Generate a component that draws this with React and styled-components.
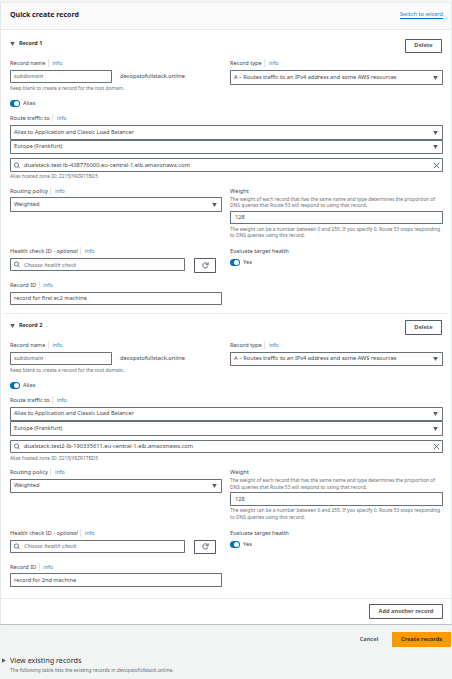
import React from 'react';
import styled, { createGlobalStyle } from 'styled-components';

const GlobalStyle = createGlobalStyle`
  * { box-sizing: border-box; }
  body {
    margin: 0;
    background: #f2f3f3;
    color: #414750;
    font: 5.69px/7px "Noto Sans", "Open Sans", sans-serif;
  }
`;

const Page = styled.main`
  display: flex;
  flex-direction: column;
  width: 452px;
  height: 679px;
  padding-top: 2px;
  overflow: hidden;
  white-space: nowrap;
`;

const Card = styled.section`
  display: flex;
  flex-direction: column;
  height: 623px;
  background: #fff;
  border: 1px solid #e6e9e9;
  border-bottom-color: #b9c0c4;
`;

const CardHeader = styled.header`
  display: flex;
  align-items: center;
  justify-content: space-between;
  height: 27px;
  padding: 0 8px 4px 9px;
  background: #fafafa;
  border-bottom: 1px solid #e6e9e9;
`;

const CardTitle = styled.h1`
  margin: 0;
  color: #1f232a;
  font-size: 7.06px;
  line-height: 10px;
  font-weight: 700;
`;

const WizardLink = styled.a`
  height: 8px;
  margin-top: 2px;
  line-height: 7px;
  color: #2a86c2;
  border-bottom: 1px solid #0073bb;
`;

const RecordBox = styled.section`
  display: flex;
  flex-direction: column;
  height: ${(p) => p.$h}px;
  margin: 0 4px;
  padding: ${(p) => p.$top}px 4px 0 5px;
  & + & { margin-top: 1px; }
`;

const RecordHead = styled.div`
  display: flex;
  justify-content: space-between;
  align-items: flex-start;
  height: ${(p) => p.$h}px;
  padding-right: 1px;
`;

const RecordTitle = styled.h2`
  display: flex;
  align-items: center;
  gap: 4px;
  margin: ${(p) => p.$mt}px 0 0;
  height: 8px;
  color: #2a2f36;
  font-size: 5.45px;
  font-weight: 700;
`;

const Button = styled.button`
  display: flex;
  align-items: center;
  justify-content: center;
  width: ${(p) => p.$w}px;
  height: ${(p) => p.$h}px;
  padding: 0 0 ${(p) => p.$lift ?? 1}px;
  font: 700 5.66px/7px "Noto Sans", sans-serif;
  color: #545b64;
  background: #fff;
  border: 1px solid #545b64;
  border-radius: 0.8px;
`;

const PrimaryButton = styled(Button)`
  color: #3a2c17;
  background: #ff9900;
  border-color: #ff9900;
`;

const TextButton = styled(Button)`
  background: transparent;
  border-color: transparent;
`;

const Columns = styled.div`
  display: grid;
  grid-template-columns: 212px 213px;
  column-gap: 8px;
  height: ${(p) => p.$h}px;
`;

const Field = styled.div`
  display: flex;
  flex-direction: column;
  height: ${(p) => (p.$h ? `${p.$h}px` : 'auto')};
`;

const LabelRow = styled.div`
  display: flex;
  align-items: center;
  height: 8px;
  margin-bottom: ${(p) => p.$gap ?? 3}px;
  line-height: 8px;
  white-space: pre;
`;

const Info = styled.a`
  height: 8px;
  margin-left: 2.4px;
  padding-left: 3.7px;
  color: #2a86c2;
  font-size: 5.3px;
  border-left: 1px solid #e1e4e6;
`;

const Control = styled.div`
  display: flex;
  align-items: center;
  width: ${(p) => (p.$w ? `${p.$w}px` : '100%')};
  height: ${(p) => p.$h}px;
  flex: none;
  margin-top: ${(p) => p.$mt ?? 0}px;
  padding: 0 ${(p) => p.$end ?? 4}px 0 3px;
  background: #fff;
  border: 1px solid #687078;
  border-radius: 0.8px;
`;

const Value = styled.span`
  flex: 1;
  padding-bottom: ${(p) => p.$lift ?? 0}px;
  padding-left: ${(p) => p.$indent ?? 0}px;
  font-size: ${(p) => p.$size ?? 5.64}px;
`;

const Placeholder = styled.em`
  flex: 1;
  color: #687078;
  font-size: 5.8px;
  padding-top: ${(p) => p.$drop ?? 0}px;
  padding-left: ${(p) => p.$indent ?? 0}px;
`;

const Helper = styled.p`
  margin: ${(p) => p.$mt}px 0 0;
  color: #687078;
  font-size: 4.86px;
  line-height: ${(p) => p.$lh ?? 6}px;
`;

const Inline = styled.div`
  display: flex;
  align-items: ${(p) => p.$align ?? 'center'};
  gap: ${(p) => p.$gap}px;
`;

const ToggleRow = styled.div`
  display: flex;
  align-items: center;
  gap: 3px;
  height: 7px;
  margin-top: ${(p) => p.$mt}px;
`;

const ToggleText = styled.span`
  margin-top: -1px;
`;

const Track = styled.span`
  display: flex;
  justify-content: flex-end;
  align-items: center;
  width: 10px;
  height: 6.5px;
  padding-right: 0.8px;
  border-radius: 4px;
  background: #0073bb;
`;

const Knob = styled.span`
  width: 5px;
  height: 5px;
  border-radius: 50%;
  background: #fff;
`;

const Footer = styled.footer`
  display: flex;
  justify-content: flex-end;
  padding: 5px 8px 0 0;
  border-top: 1px solid #e6e9e9;
`;

const RecordList = styled.div`
  display: flex;
  flex-direction: column;
  height: 568px;
`;

const Divider = styled.hr`
  width: 442px;
  height: 1px;
  margin: 0 4px;
  border: 0;
  background: #e6e9e9;
`;

const Actions = styled.div`
  display: flex;
  justify-content: flex-end;
  gap: 3px;
  height: 15px;
  margin-top: 7px;
  padding-right: 1px;
`;

const Existing = styled.section`
  display: flex;
  align-items: flex-start;
  gap: 4px;
  margin-top: 8px;
  padding-left: 2px;
`;

const ExistingTitle = styled.h2`
  margin: 0;
  color: #2a2f36;
  font-size: 7.22px;
  line-height: 10px;
  font-weight: 400;
`;

const Icon = styled.svg`
  display: block;
  flex: none;
  margin-top: ${(p) => p.$mt ?? 0}px;
`;

const Caret = ({ mt }) => (
  <Icon width="5" height="4" viewBox="0 0 5 4" $mt={mt}>
    <path d="M0.2 0h4.6L2.5 3.9z" fill="#545b64" />
  </Icon>
);

const CaretRight = () => (
  <Icon width="4" height="5" viewBox="0 0 4 5" $mt={3}>
    <path d="M0 0.2v4.6L3.9 2.5z" fill="#545b64" />
  </Icon>
);

const SearchIcon = () => (
  <Icon width="6" height="7" viewBox="0 0 6 7" fill="none" stroke="#545b64" strokeWidth="0.8">
    <circle cx="2.5" cy="3" r="2.1" />
    <path d="M4 4.5l1.9 1.9" />
  </Icon>
);

const CloseIcon = () => (
  <Icon width="7" height="7" viewBox="0 0 7 7" stroke="#545b64" strokeWidth="0.9">
    <path d="M0.8 0.8l5.4 5.4M6.2 0.8L0.8 6.2" />
  </Icon>
);

const RefreshIcon = () => (
  <Icon width="7" height="7" viewBox="0 0 7 7" fill="none" stroke="#545b64" strokeWidth="0.9">
    <path d="M5.8 4.2A2.6 2.6 0 1 1 5 1.4L5.9 2.4M6.2 0.3v2.4H3.8" />
  </Icon>
);

const Label = ({ children, info, gap }) => (
  <LabelRow $gap={gap}>
    {children}
    {info && <Info>info</Info>}
  </LabelRow>
);

const Select = ({ h, w, children, lift = 1 }) => (
  <Control $h={h} $w={w}>
    <Value $lift={lift}>{children}</Value>
    <Caret />
  </Control>
);

const Toggle = ({ mt, children }) => (
  <ToggleRow $mt={mt}>
    <Track><Knob /></Track>
    <ToggleText>{children}</ToggleText>
  </ToggleRow>
);

const RECORDS = [
  {
    title: 'Record 1',
    host: 'dualstack.test-lb-438776000.eu-central-1.elb.amazonaws.com',
    id: 'record for first ec2 machine',
    m: {
      h: 283, top: 9, titleMt: 0, head: 20, del: 14, delLift: 1, nameRow: 55, type: 15, nameHelp: 2, alias: 9,
      route: 73, app: 15, region: 14, regionLift: 1, search: 14, hosted: 1, policyRow: 60, policy: 15,
      policyGap: 2, lh: 6, weightMt: 3, weight: 13, weightHelp: 2, healthRow: 34, healthDrop: 1,
      refresh: 15, evalMt: 1, idGap: 3, recordId: 13,
    },
  },
  {
    title: 'Record 2',
    host: 'dualstack.test2-lb-190335611.eu-central-1.elb.amazonaws.com',
    id: 'record for 2nd machine',
    m: {
      h: 284, top: 5, titleMt: 1, head: 21, del: 15, delLift: 0, nameRow: 55, type: 14, nameHelp: 2, alias: 9,
      route: 72, app: 14, region: 15, regionLift: 0, search: 13, hosted: 2, policyRow: 61, policy: 14,
      policyGap: 3, lh: 7, weightMt: 1, weight: 14, weightHelp: 1, healthRow: 34, healthDrop: 0,
      refresh: 14, evalMt: 1, idGap: 2, recordId: 14,
    },
  },
];

const Record = ({ title, host, id, m }) => (
  <RecordBox $h={m.h} $top={m.top}>
    <RecordHead $h={m.head}>
      <RecordTitle $mt={m.titleMt}><Caret mt={1} />{title}</RecordTitle>
      <Button $w={37} $h={m.del} $lift={m.delLift}>Delete</Button>
    </RecordHead>
    <Columns $h={m.nameRow}>
      <Field>
        <Label info>Record name</Label>
        <Inline $gap={8}>
          <Control $w={102} $h={13}><Placeholder>subdomain</Placeholder></Control>
          <span>devopstofullstack.online</span>
        </Inline>
        <Helper $mt={m.nameHelp}>Keep blank to create a record for the root domain.</Helper>
        <Toggle mt={m.alias}>Alias</Toggle>
      </Field>
      <Field>
        <Label info>Record type</Label>
        <Select h={m.type}>A – Routes traffic to an IPv4 address and some AWS resources</Select>
      </Field>
    </Columns>
    <Field $h={m.route}>
      <Label info>Route traffic to</Label>
      <Select h={m.app}>Alias to Application and Classic Load Balancer</Select>
      <Select h={m.region} lift={m.regionLift}>Europe (Frankfurt)</Select>
      <Control $h={m.search} $mt={4} $end={2}>
        <SearchIcon />
        <Value $indent={4} $size={5.74}>{host}</Value>
        <CloseIcon />
      </Control>
      <Helper $mt={m.hosted}>Alias hosted zone ID: Z215JYRZR1TBD5</Helper>
    </Field>
    <Columns $h={m.policyRow}>
      <Field>
        <Label info gap={m.policyGap}>Routing policy</Label>
        <Select h={m.policy}>Weighted</Select>
      </Field>
      <Field>
        <Label gap={0}>Weight</Label>
        <Helper $mt={1} $lh={m.lh}>
          The weight of each record that has the same name and type determines the proportion of
          <br />DNS queries that Route 53 will respond to using that record.
        </Helper>
        <Control $h={m.weight} $mt={m.weightMt}><Value $indent={1}>128</Value></Control>
        <Helper $mt={m.weightHelp} $lh={m.lh}>
          The weight can be a number between 0 and 255. If you specify 0, Route 53 stops responding
          <br />to DNS queries using this record.
        </Helper>
      </Field>
    </Columns>
    <Columns $h={m.healthRow}>
      <Field>
        <Label info>Health check ID - <em>optional</em></Label>
        <Inline $gap={9} $align="flex-start">
          <Control $w={175} $h={13}>
            <SearchIcon />
            <Placeholder $indent={4} $drop={m.healthDrop}>Choose health check</Placeholder>
          </Control>
          <Button $w={22} $h={m.refresh}><RefreshIcon /></Button>
        </Inline>
      </Field>
      <Field>
        <Label>Evaluate target health</Label>
        <Toggle mt={m.evalMt}>Yes</Toggle>
      </Field>
    </Columns>
    <Field>
      <Label info gap={m.idGap}>Record ID</Label>
      <Control $w={212} $h={m.recordId}><Value>{id}</Value></Control>
    </Field>
  </RecordBox>
);

export default function App() {
  return (
    <>
      <GlobalStyle />
      <Page>
        <Card>
          <CardHeader>
            <CardTitle>Quick create record</CardTitle>
            <WizardLink>Switch to wizard</WizardLink>
          </CardHeader>
          <RecordList>
            {RECORDS.map((r, i) => (
              <React.Fragment key={r.title}>
                {i > 0 && <Divider />}
                <Record {...r} m={i > 0 ? { ...r.m, top: r.m.top + 1 } : r.m} />
              </React.Fragment>
            ))}
          </RecordList>
          <Footer>
            <Button $w={74} $h={15}>Add another record</Button>
          </Footer>
        </Card>
        <Actions>
          <TextButton $w={40} $h={15}>Cancel</TextButton>
          <PrimaryButton $w={59} $h={15}>Create records</PrimaryButton>
        </Actions>
        <Existing>
          <CaretRight />
          <div>
            <ExistingTitle>View existing records</ExistingTitle>
            <Helper $mt={2}>The following table lists the existing records in devopstofullstack.online.</Helper>
          </div>
        </Existing>
      </Page>
    </>
  );
}
